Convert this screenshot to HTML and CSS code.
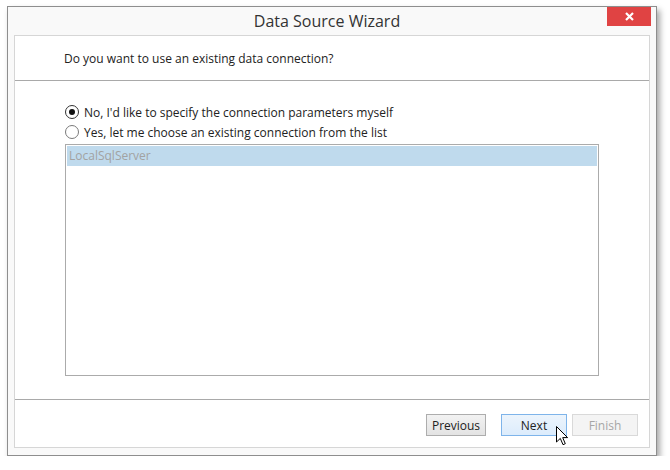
FILE: index.html
```html
<!DOCTYPE html>
<html>
<head>
<meta charset="utf-8">
<link rel="stylesheet" href="styles.css">
</head>
<body>
<div class="window">
  <div class="titlebar">
    <div class="title">Data Source Wizard</div>
    <div class="close"><svg width="9" height="9" viewBox="0 0 9 9"><path d="M1 1 L8 8 M8 1 L1 8" stroke="#fff" stroke-width="2.2"/></svg></div>
  </div>
  <div class="panel">
    <div class="header">Do you want to use an existing data connection?</div>
    <div class="body">
      <label class="radio-row"><span class="radio checked"></span><span>No, I'd like to specify the connection parameters myself</span></label>
      <label class="radio-row"><span class="radio"></span><span>Yes, let me choose an existing connection from the list</span></label>
      <div class="listbox">
        <div class="item">LocalSqlServer</div>
      </div>
    </div>
    <div class="footer">
      <button class="btn prev">Previous</button>
      <button class="btn next">Next
        <svg class="cursor" width="13" height="20" viewBox="0 0 13 20"><path d="M0.5 0.5 L0.5 16 L4.3 12.4 L7 18.7 L9.3 17.7 L6.7 11.6 L11.6 11.6 Z" fill="#fff" stroke="#000" stroke-width="1" stroke-linejoin="miter"/></svg>
      </button>
      <button class="btn finish">Finish</button>
    </div>
  </div>
</div>
</body>
</html>
```
FILE: styles.css
```css
html, body {
  margin: 0;
  padding: 0;
  background: #ffffff;
  font-family: "Segoe UI", "Open Sans", "Noto Sans", sans-serif;
}
.window {
  margin: 6px 0 0 7px;
  border: 1px solid #8e8e8e;
  background: #f9f9f9;
  box-shadow: 3px 4px 6px rgba(0,0,0,0.35);
  display: flex;
  flex-direction: column;
  padding: 0 6px 7px 6px;
  box-sizing: content-box;
  width: 636px;
  height: 441px;
}
.titlebar {
  height: 28px;
  position: relative;
  display: flex;
  justify-content: center;
  align-items: center;
  flex: none;
}
.title {
  font-size: 16px;
  color: #333;
  margin-left: -10px;
}
.close {
  position: absolute;
  top: 0;
  right: -1px;
  width: 44px;
  height: 19px;
  background: #e04343;
  display: flex;
  align-items: center;
  justify-content: center;
}
.panel {
  flex: 1;
  background: #fff;
  border: 1px solid #d6d6d6;
  display: flex;
  flex-direction: column;
}
.header {
  height: 44px;
  border-bottom: 1px solid #a9a9a9;
  display: flex;
  align-items: center;
  padding-left: 49px;
  font-size: 12px;
  color: #222;
  flex: none;
}
.body {
  flex: 1;
  padding: 21px 0 0 50px;
  border-bottom: 1px solid #a9a9a9;
  display: flex;
  flex-direction: column;
}
.radio-row {
  display: flex;
  align-items: center;
  height: 20px;
  font-size: 12px;
  color: #222;
}
.radio {
  width: 12px;
  height: 12px;
  border: 1px solid #7a7a7a;
  border-radius: 50%;
  margin-left: 0;
  margin-right: 5px;
  position: relative;
  background: #fff;
}
.radio.checked {
  border-color: #333;
}
.radio.checked::after {
  content: "";
  position: absolute;
  left: 3px;
  top: 3px;
  width: 6px;
  height: 6px;
  border-radius: 50%;
  background: #111;
}
.listbox {
  margin-top: 2px;
  width: 534px;
  height: 232px;
  border: 1px solid #ababab;
  padding: 1px;
  box-sizing: border-box;
}
.item {
  height: 20px;
  background: #bfdaed;
  color: #a2a2a2;
  font-size: 12px;
  line-height: 20px;
  padding-left: 2px;
}
.footer {
  height: 47px;
  flex: none;
  display: flex;
  align-items: flex-start;
  justify-content: flex-end;
  padding: 14px 11px 0 0;
  box-sizing: border-box;
}
.btn {
  height: 22px;
  font-family: inherit;
  font-size: 12px;
  padding: 0;
  box-sizing: border-box;
  color: #222;
  position: relative;
}
.prev {
  width: 60px;
  border: 1px solid #adadad;
  background: linear-gradient(#f2f2f2, #e3e3e3);
  margin-right: 15px;
}
.next {
  width: 66px;
  border: 1px solid #7eb4ea;
  background: linear-gradient(#ecf4fc, #dcecfc);
  margin-right: 5px;
}
.finish {
  width: 66px;
  border: 1px solid #d9d9d9;
  background: #f4f4f4;
  color: #a6a6a6;
}
.cursor {
  position: absolute;
  left: 54px;
  top: 11px;
}
```
